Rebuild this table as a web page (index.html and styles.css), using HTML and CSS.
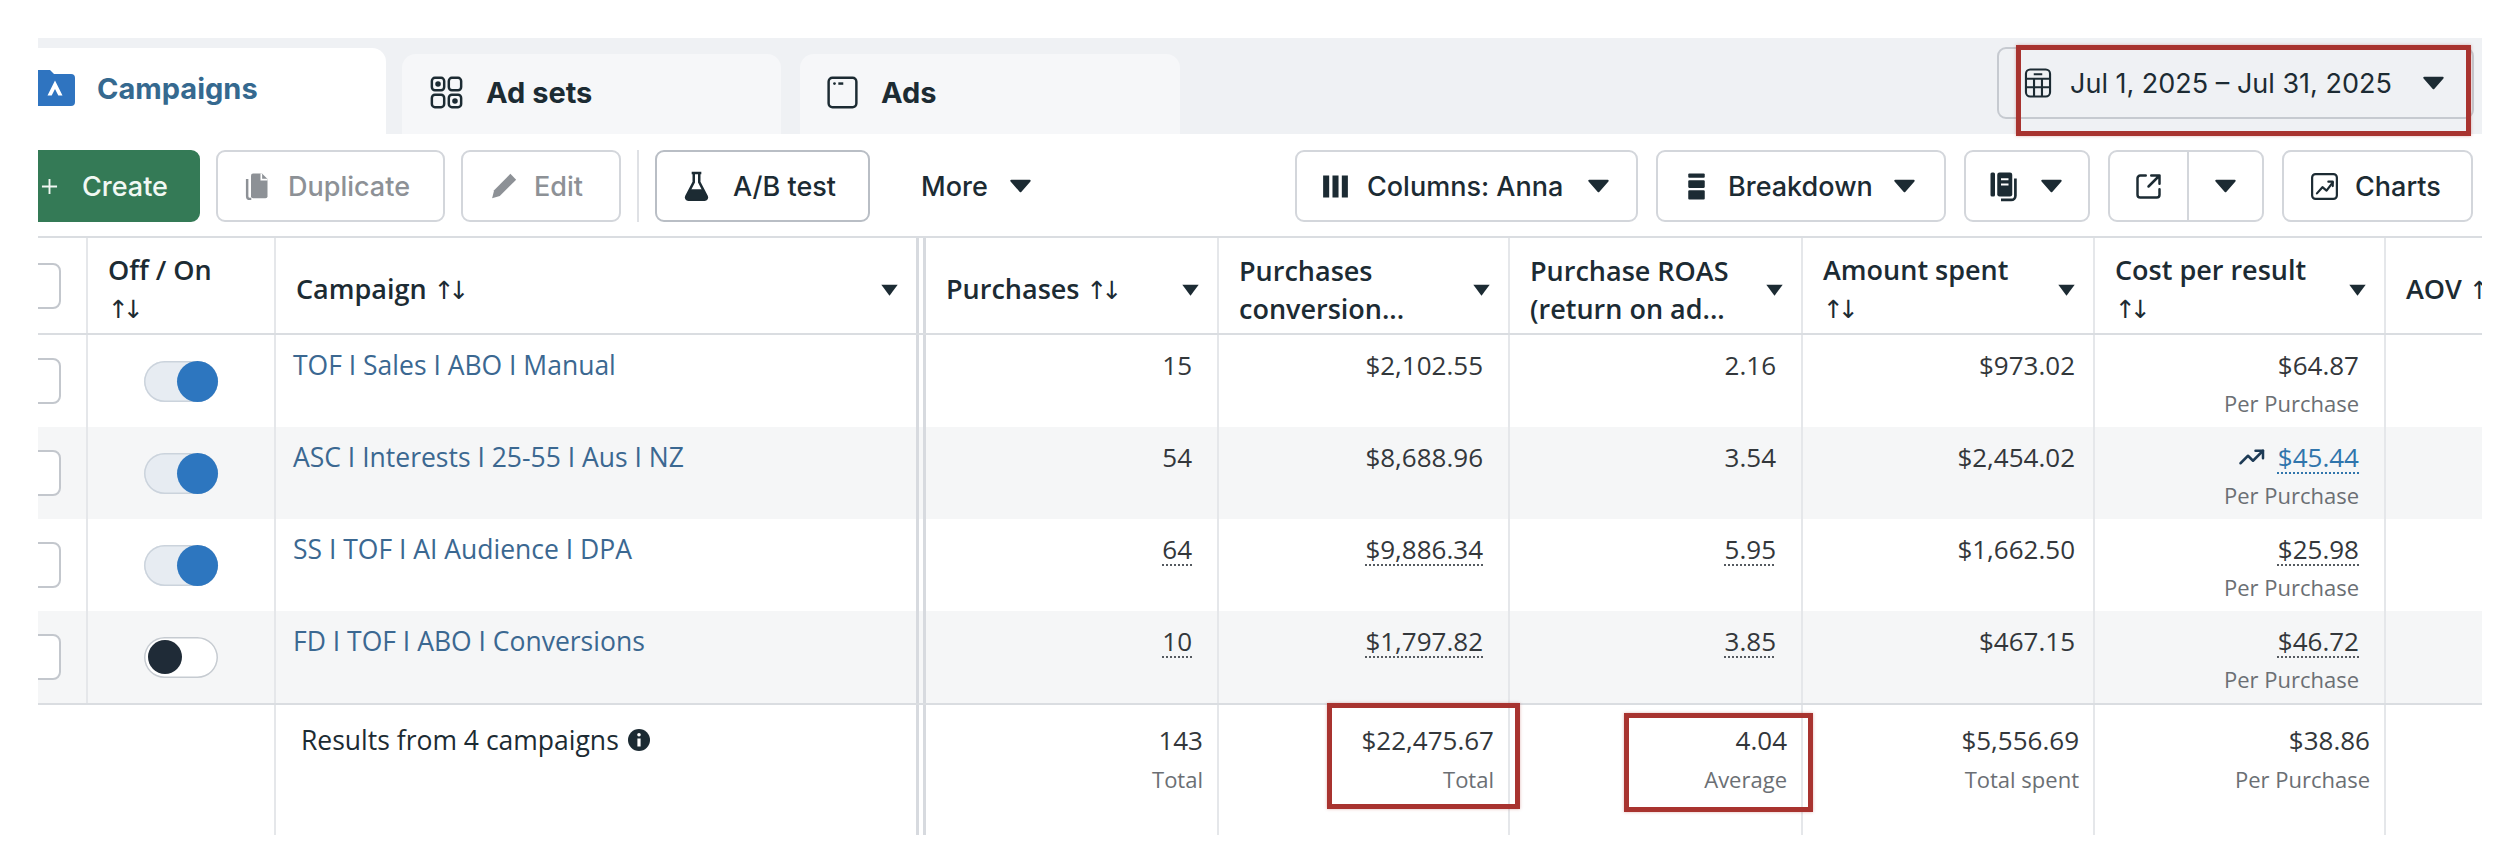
FILE: index.html
```html
<!DOCTYPE html>
<html>
<head>
<meta charset="utf-8">
<link rel="stylesheet" href="styles.css">
</head>
<body>
<div class="page">
<div class="frame">

  <div class="tabbar">
    <div class="tab tab-campaigns">
      <svg class="ic-folder" viewBox="0 0 44 40"><path d="M2 6a4 4 0 0 1 4-4h11l4 4h17a4 4 0 0 1 4 4v24a4 4 0 0 1-4 4H6a4 4 0 0 1-4-4z" fill="#2f74c0"/><path d="M22 12.5l7.5 15h-4.2L22 21l-3.3 6.5h-4.2z" fill="#fff"/></svg>
      <span>Campaigns</span>
    </div>
    <div class="tab tab-adsets">
      <svg class="ic-tab" viewBox="0 0 24 24" fill="none" stroke="#1c2b33" stroke-width="1.6"><rect x="2.5" y="2.5" width="8" height="8" rx="2"/><rect x="13.5" y="2.5" width="8" height="8" rx="2"/><rect x="2.5" y="13.5" width="8" height="8" rx="2"/><rect x="13.5" y="13.5" width="8" height="8" rx="2"/><circle cx="6.5" cy="6.5" r="1.8" fill="#1c2b33" stroke="none"/><circle cx="17.5" cy="17.5" r="1.8" fill="#1c2b33" stroke="none"/></svg>
      <span>Ad sets</span>
    </div>
    <div class="tab tab-ads">
      <svg class="ic-tab" viewBox="0 0 24 24" fill="none" stroke="#1c2b33" stroke-width="1.6"><rect x="3" y="2.5" width="18" height="19" rx="2.5"/><circle cx="6.8" cy="6.2" r="0.9" fill="#1c2b33" stroke="none"/><path d="M9.3 6.2h3.2"/></svg>
      <span>Ads</span>
    </div>
    <div class="datepicker">
      <svg class="ic-cal" viewBox="0 0 24 24" fill="none" stroke="#1c2b33" stroke-width="1.5"><rect x="3.5" y="2.5" width="17" height="19" rx="3"/><path d="M3.5 9h17M3.5 15h17M9.2 9v12.5M14.8 9v12.5M9 5.8h6"/></svg>
      <span class="dp-text">Jul 1, 2025 – Jul 31, 2025</span>
      <svg class="caret" viewBox="0 0 16 10"><path d="M1 1h14L8 9z"/></svg>
    </div>
    <div class="mark mark-date"></div>
  </div>

  <div class="toolbar">
    <div class="btn b-create">
      <svg class="ic-plus" viewBox="0 0 18 18" fill="none" stroke="currentColor" stroke-width="2"><path d="M9 1v16M1 9h16"/></svg>
      <span class="lbl">Create</span>
    </div>
    <div class="btn b-dup disabled">
      <svg class="ic" viewBox="0 0 24 24"><path d="M5.2 6.5v12.5a2 2 0 0 0 2 2h1" fill="none" stroke="#8d9196" stroke-width="1.8"/><path d="M9.5 2.5h6.5l4 4v12.5a1.5 1.5 0 0 1-1.5 1.5h-9A1.5 1.5 0 0 1 8 19V4a1.5 1.5 0 0 1 1.5-1.5z" fill="#8d9196"/><path d="M15.5 2.5v4.5h4.5" fill="none" stroke="#fff" stroke-width="1.2"/></svg>
      <span class="lbl">Duplicate</span>
    </div>
    <div class="btn b-edit disabled">
      <svg class="ic" viewBox="0 0 24 24"><path d="M17 2.8l4.2 4.2L9.3 18.9l-5.6 1.6 1.5-5.7z" fill="#8d9196"/></svg>
      <span class="lbl">Edit</span>
    </div>
    <div class="vsep"></div>
    <div class="btn b-ab strong">
      <svg class="ic" viewBox="0 0 24 24"><path d="M8.5 2.2h7M10 2.2v6.6L4.6 19.2a1.7 1.7 0 0 0 1.5 2.5h11.8a1.7 1.7 0 0 0 1.5-2.5L14 8.8V2.2" fill="none" stroke="#1c2b33" stroke-width="1.8"/><path d="M7.3 14h9.4l3 5.6a1.3 1.3 0 0 1-1.2 2H5.5a1.3 1.3 0 0 1-1.2-2z" fill="#1c2b33"/></svg>
      <span class="lbl">A/B test</span>
    </div>
    <div class="more">
      <span class="lbl">More</span>
      <svg class="caret" viewBox="0 0 16 10"><path d="M1 1h14L8 9z"/></svg>
    </div>

    <div class="tool-right">
      <div class="btn b-cols">
        <svg class="ic" viewBox="0 0 24 24" fill="#1c2b33"><rect x="3" y="4" width="4.4" height="16"/><rect x="9.8" y="4" width="4.4" height="16"/><rect x="16.6" y="4" width="4.4" height="16"/></svg>
        <span class="lbl">Columns: Anna</span>
        <svg class="caret push" viewBox="0 0 16 10"><path d="M1 1h14L8 9z"/></svg>
      </div>
      <div class="btn b-break">
        <svg class="ic" viewBox="0 0 24 24" fill="#1c2b33"><rect x="6" y="2.5" width="12" height="3.2" rx="0.8"/><rect x="6" y="7.5" width="12" height="5.5" rx="0.8"/><rect x="6" y="14.8" width="12" height="6.7" rx="0.8"/></svg>
        <span class="lbl">Breakdown</span>
        <svg class="caret push" viewBox="0 0 16 10"><path d="M1 1h14L8 9z"/></svg>
      </div>
      <div class="btn b-report">
        <svg class="ic ic-big" viewBox="0 0 24 24"><rect x="3" y="3" width="3" height="16" rx="1" fill="#1c2b33"/><rect x="7.5" y="3" width="10" height="16" rx="1.5" fill="#1c2b33"/><path d="M10 7.5h5M10 11h5" stroke="#fff" stroke-width="1.4"/><path d="M19.6 7v11.5a2.8 2.8 0 0 1-2.8 2.8H10" fill="none" stroke="#1c2b33" stroke-width="1.8"/></svg>
        <svg class="caret push" viewBox="0 0 16 10"><path d="M1 1h14L8 9z"/></svg>
      </div>
      <div class="btn b-export">
        <div class="split-l">
          <svg class="ic" viewBox="0 0 24 24" fill="none" stroke="#1c2b33" stroke-width="1.8" stroke-linecap="round" stroke-linejoin="round"><path d="M10 4H6a2 2 0 0 0-2 2v12a2 2 0 0 0 2 2h12a2 2 0 0 0 2-2v-4"/><path d="M14 4h6v6M20 4l-8 8"/></svg>
        </div>
        <div class="split-r">
          <svg class="caret" viewBox="0 0 16 10"><path d="M1 1h14L8 9z"/></svg>
        </div>
      </div>
      <div class="btn b-charts">
        <svg class="ic" viewBox="0 0 24 24" fill="none" stroke="#1c2b33" stroke-width="1.6" stroke-linecap="round" stroke-linejoin="round"><rect x="3" y="3" width="18" height="18" rx="2.5"/><path d="M6.5 17l4-4.5 3 2.5 4.5-6"/><path d="M14.8 8.5H18v3.2"/></svg>
        <span class="lbl">Charts</span>
      </div>
    </div>
  </div>

  <div class="table">
    <div class="grid head">
      <div class="cell c-check"><span class="checkbox"></span></div>
      <div class="cell hcell"><span class="htext">Off / On<br><span class="sort">↑↓</span></span></div>
      <div class="cell hcell c-name"><span class="htext">Campaign <span class="sort">↑↓</span></span><svg class="hcaret" viewBox="0 0 16 12"><path d="M1 1.5h14L8 11z"/></svg></div>
      <div class="cell hcell"><span class="htext">Purchases <span class="sort">↑↓</span></span><svg class="hcaret" viewBox="0 0 16 12"><path d="M1 1.5h14L8 11z"/></svg></div>
      <div class="cell hcell"><span class="htext">Purchases<br>conversion...</span><svg class="hcaret" viewBox="0 0 16 12"><path d="M1 1.5h14L8 11z"/></svg></div>
      <div class="cell hcell"><span class="htext">Purchase ROAS<br>(return on ad...</span><svg class="hcaret" viewBox="0 0 16 12"><path d="M1 1.5h14L8 11z"/></svg></div>
      <div class="cell hcell"><span class="htext">Amount spent<br><span class="sort">↑↓</span></span><svg class="hcaret" viewBox="0 0 16 12"><path d="M1 1.5h14L8 11z"/></svg></div>
      <div class="cell hcell"><span class="htext">Cost per result<br><span class="sort">↑↓</span></span><svg class="hcaret" viewBox="0 0 16 12"><path d="M1 1.5h14L8 11z"/></svg></div>
      <div class="cell hcell c-aov"><span class="htext">AOV <span class="sort">↑↓</span></span></div>
    </div>

    <div class="grid row">
      <div class="cell c-check"><span class="checkbox"></span></div>
      <div class="cell c-toggle"><span class="toggle on"><span class="knob"></span></span></div>
      <div class="cell c-name"><span class="link">TOF I Sales I ABO I Manual</span></div>
      <div class="cell num">15</div>
      <div class="cell num">$2,102.55</div>
      <div class="cell num">2.16</div>
      <div class="cell num spent">$973.02</div>
      <div class="cell num"><span>$64.87</span><span class="sub">Per Purchase</span></div>
      <div class="cell"></div>
    </div>

    <div class="grid row alt">
      <div class="cell c-check"><span class="checkbox"></span></div>
      <div class="cell c-toggle"><span class="toggle on"><span class="knob"></span></span></div>
      <div class="cell c-name"><span class="link">ASC I Interests I 25-55 I Aus I NZ</span></div>
      <div class="cell num">54</div>
      <div class="cell num">$8,688.96</div>
      <div class="cell num">3.54</div>
      <div class="cell num spent">$2,454.02</div>
      <div class="cell num"><span class="trend"><svg class="ic-trend" viewBox="0 0 24 16" fill="none" stroke="#1d3b56" stroke-width="2" stroke-linecap="round" stroke-linejoin="round"><path d="M2 13l6-6 4 4 8-8"/><path d="M14 3h6v6"/></svg><span class="dot blue">$45.44</span></span><span class="sub">Per Purchase</span></div>
      <div class="cell"></div>
    </div>

    <div class="grid row">
      <div class="cell c-check"><span class="checkbox"></span></div>
      <div class="cell c-toggle"><span class="toggle on"><span class="knob"></span></span></div>
      <div class="cell c-name"><span class="link">SS I TOF I AI Audience I DPA</span></div>
      <div class="cell num"><span class="dot">64</span></div>
      <div class="cell num"><span class="dot">$9,886.34</span></div>
      <div class="cell num"><span class="dot">5.95</span></div>
      <div class="cell num spent">$1,662.50</div>
      <div class="cell num"><span class="dot">$25.98</span><span class="sub">Per Purchase</span></div>
      <div class="cell"></div>
    </div>

    <div class="grid row alt">
      <div class="cell c-check"><span class="checkbox"></span></div>
      <div class="cell c-toggle"><span class="toggle off"><span class="knob"></span></span></div>
      <div class="cell c-name"><span class="link">FD I TOF I ABO I Conversions</span></div>
      <div class="cell num"><span class="dot">10</span></div>
      <div class="cell num"><span class="dot">$1,797.82</span></div>
      <div class="cell num"><span class="dot">3.85</span></div>
      <div class="cell num spent">$467.15</div>
      <div class="cell num"><span class="dot">$46.72</span><span class="sub">Per Purchase</span></div>
      <div class="cell"></div>
    </div>

    <div class="grid foot">
      <div class="cell c-check nob"></div>
      <div class="cell"></div>
      <div class="cell c-name"><span class="results">Results from 4 campaigns <svg class="ic-info" viewBox="0 0 24 24"><circle cx="12" cy="12" r="11" fill="#1c2b33"/><circle cx="12" cy="6.8" r="1.8" fill="#fff"/><path d="M12 10.5v8" stroke="#fff" stroke-width="3.2"/></svg></span></div>
      <div class="cell num"><span>143</span><span class="sub">Total</span></div>
      <div class="cell num hl-host"><span>$22,475.67</span><span class="sub">Total</span><span class="mark mark-total"></span></div>
      <div class="cell num hl-host"><span>4.04</span><span class="sub">Average</span><span class="mark mark-avg"></span></div>
      <div class="cell num spent"><span>$5,556.69</span><span class="sub">Total spent</span></div>
      <div class="cell num"><span>$38.86</span><span class="sub">Per Purchase</span></div>
      <div class="cell"></div>
    </div>
  </div>

</div>
</div>
</body>
</html>
```

FILE: styles.css
```css
body {
  margin: 0;
  background: #ffffff;
  font-family: "Open Sans", "Liberation Sans", sans-serif;
  color: #1c2b33;
}

.page {
  padding-top: 38px;
}

.frame {
  margin-left: 38px;
  width: 2444px;
  overflow: hidden;
  position: relative;
}

/* ---------- tabs ---------- */
.tabbar {
  height: 96px;
  background: #eff1f4;
  display: flex;
  align-items: flex-end;
  position: relative;
}

.tab {
  display: flex;
  align-items: center;
  box-sizing: border-box;
  height: 80px;
  border-radius: 14px 14px 0 0;
  background: #f6f7f9;
  font-family: "Inter", "Roboto", sans-serif;
  font-weight: 700;
  font-size: 29px;
  color: #1c2b33;
  padding-bottom: 4px;
  white-space: nowrap;
}

.tab-campaigns {
  height: 86px;
  background: #ffffff;
  margin-left: -20px;
  width: 368px;
  padding-left: 15px;
  gap: 20px;
  color: #35698f;
  padding-bottom: 6px;
}

.tab-adsets {
  margin-left: 16px;
  width: 379px;
  padding-left: 26px;
  gap: 21px;
}

.tab-ads {
  margin-left: 19px;
  width: 380px;
  padding-left: 24px;
  gap: 20px;
}

.ic-folder {
  width: 44px;
  height: 40px;
  flex: none;
}

.ic-tab {
  width: 37px;
  height: 37px;
  flex: none;
}

.datepicker {
  margin-left: auto;
  margin-right: 8px;
  align-self: flex-start;
  margin-top: 9px;
  height: 72px;
  width: 477px;
  box-sizing: border-box;
  border: 2px solid #c6cad0;
  border-radius: 9px;
  display: flex;
  align-items: center;
  padding: 0 28px 0 22px;
  gap: 15px;
  font-family: "Inter", "Roboto", sans-serif;
  font-size: 27px;
  color: #1c2b33;
  white-space: nowrap;
}

.dp-text {
  flex: none;
}

.datepicker .caret {
  margin-left: auto;
}

.ic-cal {
  width: 34px;
  height: 34px;
  flex: none;
}

.caret {
  width: 21px;
  height: 14px;
  fill: #1c2b33;
  stroke: #1c2b33;
  stroke-width: 1.5;
  stroke-linejoin: round;
  flex: none;
}

.mark {
  position: absolute;
  box-sizing: border-box;
  border: 5px solid #a8332f;
  box-shadow: 0 0 3px rgba(168, 51, 47, 0.35);
  pointer-events: none;
}

.mark-date {
  left: 1978px;
  top: 7px;
  width: 455px;
  height: 91px;
}

/* ---------- toolbar ---------- */
.toolbar {
  height: 102px;
  box-sizing: border-box;
  margin-left: -16px;
  padding: 16px 9px 0 0;
  display: flex;
  align-items: flex-start;
  gap: 16px;
  font-family: "Inter", "Roboto", sans-serif;
  font-size: 27px;
  font-weight: 500;
}

.lbl {
  flex: none;
  white-space: nowrap;
}

.btn {
  height: 72px;
  box-sizing: border-box;
  border: 2px solid #d3d6db;
  border-radius: 9px;
  background: #ffffff;
  display: flex;
  align-items: center;
  gap: 15px;
  padding: 0 22px;
  color: #1c2b33;
  flex: none;
}

.btn.strong {
  border-color: #b9bec5;
}

.btn.disabled {
  color: #8d9196;
}

.b-create {
  width: 178px;
  background: #347a56;
  border-color: #347a56;
  color: #f1f8f3;
  padding-left: 17px;
  gap: 24px;
}

.ic-plus {
  width: 17px;
  height: 17px;
  flex: none;
}

.b-dup { width: 229px; }
.b-edit { width: 160px; padding-left: 24px; gap: 14px; }
.b-ab { width: 215px; padding-left: 23px; gap: 20px; }

.ic {
  width: 33px;
  height: 33px;
  flex: none;
}

.ic-big {
  width: 36px;
  height: 36px;
}

.vsep {
  width: 2px;
  height: 72px;
  background: #dfe1e5;
  flex: none;
}

.more {
  height: 72px;
  display: flex;
  align-items: center;
  gap: 22px;
  margin-left: 35px;
  color: #1c2b33;
}

.tool-right {
  margin-left: auto;
  display: flex;
  gap: 18px;
}

.push {
  margin-left: auto;
}

.b-cols { width: 343px; padding-right: 27px; }
.b-break { width: 290px; padding-right: 29px; }
.b-report { width: 126px; padding-left: 20px; padding-right: 26px; }
.b-charts { width: 191px; padding-left: 24px; gap: 14px; }

.b-export {
  width: 156px;
  padding: 0;
  gap: 0;
}

.split-l {
  width: 79px;
  height: 100%;
  box-sizing: border-box;
  border-right: 2px solid #d3d6db;
  display: flex;
  align-items: center;
  justify-content: center;
}

.split-r {
  flex: 1;
  display: flex;
  align-items: center;
  justify-content: center;
}

/* ---------- table ---------- */
.grid {
  display: grid;
  grid-template-columns: 50px 188px 650px 293px 291px 293px 292px 291px 291px;
}

.cell {
  box-sizing: border-box;
  border-right: 2px solid #e5e7ea;
  min-width: 0;
  position: relative;
}

.cell.nob {
  border-right: none;
}

.c-name {
  border-right: 10px double #d7dadf;
}

.head {
  height: 99px;
  box-sizing: border-box;
  border-top: 2px solid #dadde1;
  border-bottom: 2px solid #dadde1;
}

.c-check {
  display: flex;
  align-items: center;
}

.checkbox {
  display: block;
  width: 46px;
  height: 46px;
  margin-left: -23px;
  box-sizing: border-box;
  border: 2px solid #c3c7cd;
  border-radius: 8px;
  background: #ffffff;
  flex: none;
}

.hcell {
  display: flex;
  align-items: center;
  justify-content: space-between;
  padding: 8px 17px 0 20px;
  font-size: 27px;
  font-weight: 600;
  line-height: 38px;
  color: #1c2b33;
  white-space: nowrap;
}

.c-aov {
  justify-content: flex-start;
}

.sort {
  font-family: "DejaVu Sans", sans-serif;
  font-weight: 400;
  font-size: 25px;
  letter-spacing: -6px;
}

.hcaret {
  width: 19px;
  height: 14px;
  fill: #1c2b33;
  flex: none;
}

.row {
  height: 92px;
  background: #ffffff;
}

.row.alt {
  background: #f5f6f7;
}

.c-toggle {
  display: flex;
  align-items: center;
  justify-content: center;
}

.toggle {
  width: 74px;
  height: 41px;
  border-radius: 21px;
  display: flex;
  align-items: center;
  box-sizing: border-box;
}

.toggle.on {
  background: #e7ecf2;
  box-shadow: inset 0 0 0 1.5px #cbd3dc;
  justify-content: flex-end;
}

.toggle.on .knob {
  width: 41px;
  height: 41px;
  border-radius: 50%;
  background: #2d76bf;
}

.toggle.off {
  background: #ffffff;
  box-shadow: inset 0 0 0 1.5px #c6cbd1;
  justify-content: flex-start;
  padding-left: 4px;
}

.toggle.off .knob {
  width: 34px;
  height: 34px;
  border-radius: 50%;
  background: #1f2b37;
}

.row .c-name {
  padding: 12px 0 0 17px;
  font-size: 26.5px;
  line-height: 36px;
}

.link {
  color: #3b6891;
}

.num {
  display: flex;
  flex-direction: column;
  align-items: flex-end;
  padding: 12px 25px 0 0;
  font-size: 26px;
  line-height: 36px;
  color: #33373b;
  white-space: nowrap;
}

.num.spent {
  padding-right: 18px;
}

.sub {
  font-size: 22px;
  line-height: 40px;
  color: #6b6f74;
}

.dot {
  text-decoration: underline dotted #555a60;
  text-decoration-thickness: 2px;
  text-underline-offset: 5px;
}

.dot.blue {
  color: #3075ac;
  text-decoration-color: #3075ac;
}

.trend {
  display: flex;
  align-items: center;
  gap: 10px;
}

.ic-trend {
  width: 30px;
  height: 20px;
  flex: none;
}

.foot {
  height: 132px;
  box-sizing: border-box;
  border-top: 2px solid #dadde1;
}

.foot .c-name {
  padding: 16px 0 0 25px;
  font-size: 26.5px;
  line-height: 38px;
}

.foot .num {
  padding: 16px 14px 0 0;
  line-height: 38px;
}

.foot .num.spent {
  padding-right: 14px;
}

.results {
  display: inline-flex;
  align-items: center;
  gap: 8px;
  color: #1c2b33;
  white-space: nowrap;
}

.ic-info {
  width: 24px;
  height: 24px;
  flex: none;
}

.mark-total {
  left: 108px;
  top: -2px;
  width: 193px;
  height: 106px;
}

.mark-avg {
  left: 114px;
  top: 8px;
  width: 189px;
  height: 99px;
}
```
